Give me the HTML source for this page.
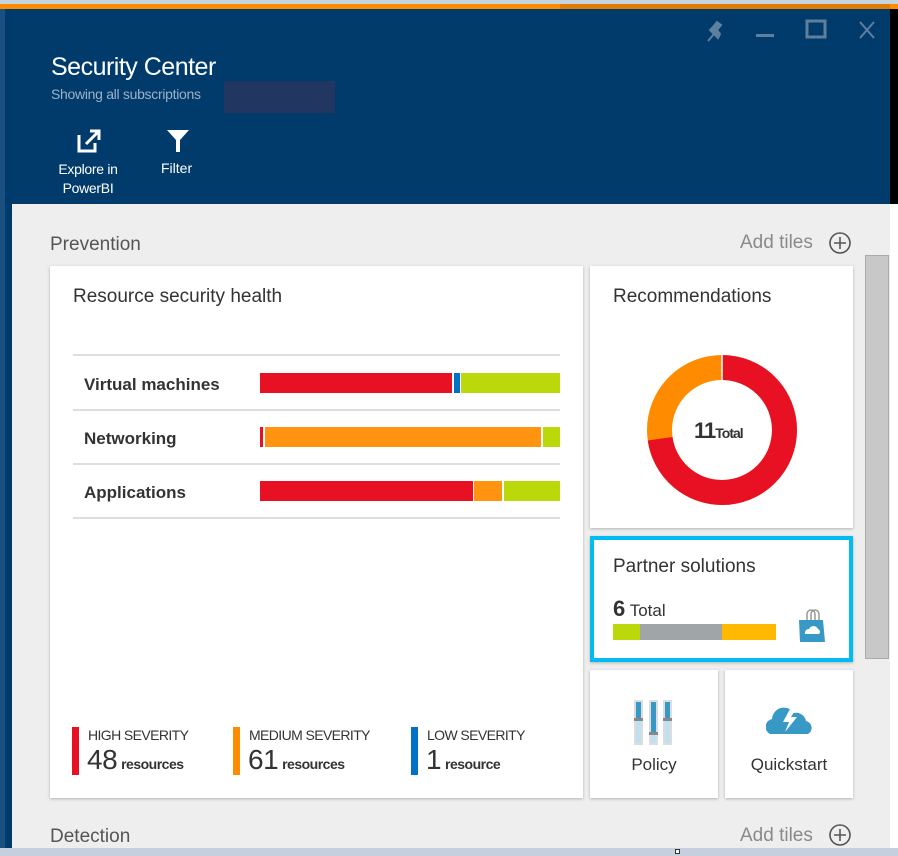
<!DOCTYPE html><html><head><style>
*{margin:0;padding:0;box-sizing:border-box}
body{width:898px;height:856px;overflow:hidden;background:#eeeeee;font-family:"Segoe UI","Liberation Sans",sans-serif;position:relative;color:#333}
.a{position:absolute}
.tile{position:absolute;background:#fff;box-shadow:0 1px 3px rgba(0,0,0,.25)}
.lbl{font-size:17px;font-weight:bold;color:#333}
</style></head><body>
<div class="a" style="left:0;top:0;width:898px;height:4px;background:#c8d3e0"></div>
<div class="a" style="left:0;top:4px;width:898px;height:5px;background:#ff8c00"></div>
<div class="a" style="left:560px;top:4px;width:330px;height:5px;background:#e07c00"></div>
<div class="a" style="left:0;top:9px;width:12px;height:847px;background:#003a6c"></div>
<div class="a" style="left:0;top:9px;width:5px;height:847px;background:#1a5080"></div>
<div class="a" style="left:12px;top:9px;width:878px;height:195px;background:#003b6b"></div>
<div class="a" style="left:890px;top:9px;width:8px;height:195px;background:#000"></div>
<div class="a" style="left:890px;top:204px;width:8px;height:652px;background:#fff"></div>
<div class="a" style="left:51px;top:53px;color:#fff;font-size:25px;letter-spacing:-.5px">Security Center</div>
<div class="a" style="left:51px;top:86px;color:#9bb2c9;font-size:14px;letter-spacing:-.3px">Showing all subscriptions</div>
<div class="a" style="left:224px;top:81px;width:111px;height:32px;background:#213762"></div>
<svg class="a" style="left:700px;top:16px" width="190" height="30">
<path d="M14 18 L8 25 M10 14 L18 22 L20 18 L17 14 L21 9 L17 6 L13 11 Z" fill="#5f7f9f" stroke="#5f7f9f" stroke-width="2"/>
<rect x="56" y="18" width="18" height="3" fill="#5f7f9f"/>
<rect x="107" y="5" width="18" height="16" fill="none" stroke="#5f7f9f" stroke-width="3"/>
<path d="M160 6 L174 22 M174 6 L160 22" stroke="#5f7f9f" stroke-width="2"/>
</svg>
<svg class="a" style="left:76px;top:128px" width="26" height="26"><path d="M3 7 V23 H19 V15" fill="none" stroke="#fff" stroke-width="3"/><path d="M10 16 L22 4 M14 3 H23 V12" fill="none" stroke="#fff" stroke-width="3"/></svg>
<svg class="a" style="left:166px;top:129px" width="24" height="24"><path d="M1 1 H23 L14 11 V23 H10 V11 Z" fill="#fff"/></svg>
<div class="a" style="left:48px;top:160px;width:80px;text-align:center;color:#fff;font-size:14px;line-height:19px;letter-spacing:-.3px">Explore in PowerBI</div>
<div class="a" style="left:161px;top:160px;color:#fff;font-size:14px">Filter</div>
<div class="a" style="left:50px;top:234px;font-size:19px;color:#555">Prevention</div>
<div class="a" style="left:740px;top:232px;font-size:19px;color:#8a8a8a">Add tiles</div>
<svg class="a" style="left:828px;top:231px" width="24" height="24"><circle cx="12" cy="12" r="10" fill="none" stroke="#555" stroke-width="1.6"/><path d="M12 6V18M6 12H18" stroke="#555" stroke-width="1.6"/></svg>
<div class="a" style="left:50px;top:826px;font-size:19px;color:#555">Detection</div>
<div class="a" style="left:740px;top:825px;font-size:19px;color:#8a8a8a">Add tiles</div>
<svg class="a" style="left:828px;top:823px" width="24" height="24"><circle cx="12" cy="12" r="10" fill="none" stroke="#555" stroke-width="1.6"/><path d="M12 6V18M6 12H18" stroke="#555" stroke-width="1.6"/></svg>
<div class="a" style="left:0;top:848px;width:898px;height:8px;background:#c5cfde"></div>
<div class="a" style="left:865px;top:255px;width:24px;height:404px;background:#c8c8c8;border:1px solid #aaa"></div>

<div class="tile" style="left:50px;top:266px;width:533px;height:532px">
<div class="a" style="left:23px;top:20px;font-size:19px;color:#333">Resource security health</div>
<div class="a" style="left:23px;top:88px;width:487px;height:2px;background:#ddd"></div>
<div class="a" style="left:23px;top:143px;width:487px;height:2px;background:#ddd"></div>
<div class="a" style="left:23px;top:197px;width:487px;height:2px;background:#ddd"></div>
<div class="a" style="left:23px;top:251px;width:487px;height:2px;background:#ddd"></div>
<div class="a lbl" style="left:34px;top:109px">Virtual machines</div>
<div class="a lbl" style="left:34px;top:163px">Networking</div>
<div class="a lbl" style="left:34px;top:217px">Applications</div>
<div class="a" style="left:210px;top:107px;width:192px;height:20px;background:#e81123"></div>
<div class="a" style="left:404px;top:107px;width:6px;height:20px;background:#0072c6"></div>
<div class="a" style="left:411px;top:107px;width:99px;height:20px;background:#bad80a"></div>
<div class="a" style="left:210px;top:161px;width:3px;height:20px;background:#e81123"></div>
<div class="a" style="left:215px;top:161px;width:276px;height:20px;background:#ff9410"></div>
<div class="a" style="left:493px;top:161px;width:17px;height:20px;background:#bad80a"></div>
<div class="a" style="left:210px;top:215px;width:213px;height:20px;background:#e81123"></div>
<div class="a" style="left:424px;top:215px;width:28px;height:20px;background:#ff9410"></div>
<div class="a" style="left:454px;top:215px;width:56px;height:20px;background:#bad80a"></div>
<div class="a" style="left:22px;top:461px;width:7px;height:48px;background:#e81123"></div>
<div class="a" style="left:183px;top:461px;width:7px;height:48px;background:#ff8c00"></div>
<div class="a" style="left:361px;top:461px;width:7px;height:48px;background:#0072c6"></div>
<div class="a" style="left:38px;top:461px;font-size:14px;color:#333;letter-spacing:-.6px">HIGH SEVERITY</div>
<div class="a" style="left:199px;top:461px;font-size:14px;color:#333;letter-spacing:-.6px">MEDIUM SEVERITY</div>
<div class="a" style="left:377px;top:461px;font-size:14px;color:#333;letter-spacing:-.6px">LOW SEVERITY</div>
<div class="a" style="left:37px;top:478px;color:#333;white-space:nowrap;letter-spacing:-.5px"><span style="font-size:28px">48</span> <b style="font-size:14px">resources</b></div>
<div class="a" style="left:198px;top:478px;color:#333;white-space:nowrap;letter-spacing:-.5px"><span style="font-size:28px">61</span> <b style="font-size:14px">resources</b></div>
<div class="a" style="left:376px;top:478px;color:#333;white-space:nowrap;letter-spacing:-.5px"><span style="font-size:28px">1</span> <b style="font-size:14px">resource</b></div>
</div>

<div class="tile" style="left:590px;top:266px;width:263px;height:262px">
<div class="a" style="left:23px;top:20px;font-size:19px">Recommendations</div>
<svg class="a" style="left:57px;top:89px" width="150" height="150">
<circle cx="75" cy="75" r="62.5" fill="none" stroke="#ff8c00" stroke-width="25"/>
<circle cx="75" cy="75" r="62.5" fill="none" stroke="#e81123" stroke-width="25" stroke-dasharray="285.6 400" transform="rotate(-90 75 75)"/>
<line x1="75" y1="0" x2="75" y2="25" stroke="#fff" stroke-width="1.5"/>
</svg>
<div class="a" style="left:104px;top:152px;font-size:22px;font-weight:bold;color:#333;letter-spacing:-1px">11<span style="font-size:14px">Total</span></div>
</div>

<div class="tile" style="left:590px;top:536px;width:263px;height:126px;border:4px solid #00bcf2">
<div class="a" style="left:19px;top:16px;font-size:19px">Partner solutions</div>
<div class="a" style="left:19px;top:56px;color:#333"><b style="font-size:22px">6</b> <span style="font-size:17px">Total</span></div>
<div class="a" style="left:19px;top:84px;width:27px;height:16px;background:#bad80a"></div>
<div class="a" style="left:46px;top:84px;width:82px;height:16px;background:#a0a5a8"></div>
<div class="a" style="left:128px;top:84px;width:54px;height:16px;background:#ffb900"></div>
<svg class="a" style="left:203px;top:68px" width="32" height="36"><path d="M10 12 V6 A4 4 0 0 1 18 6 V12 M14 12 V6 A4 4 0 0 1 22 6 V12" fill="none" stroke="#999" stroke-width="1.5"/><path d="M2 12 H26 L28 34 H3 Z" fill="#3999c6"/><path d="M8 26 A4 4 0 0 1 12 21 A5 5 0 0 1 21 21 A3 3 0 0 1 22 26 Z" fill="#fff"/></svg>
</div>

<div class="tile" style="left:590px;top:670px;width:128px;height:128px">
<svg class="a" style="left:44px;top:30px" width="40" height="46">
<rect x="0" y="0" width="9" height="45" fill="#ddd"/><rect x="2" y="2" width="5" height="41" fill="#bfe0f0"/><rect x="2" y="2" width="5" height="17" fill="#3999c6"/><rect x="0" y="18" width="9" height="3" fill="#888"/>
<rect x="15" y="0" width="9" height="45" fill="#ddd"/><rect x="17" y="2" width="5" height="41" fill="#bfe0f0"/><rect x="17" y="2" width="5" height="31" fill="#3999c6"/><rect x="15" y="32" width="9" height="3" fill="#888"/>
<rect x="29" y="0" width="9" height="45" fill="#ddd"/><rect x="31" y="2" width="5" height="41" fill="#bfe0f0"/><rect x="31" y="2" width="5" height="17" fill="#3999c6"/><rect x="29" y="18" width="9" height="3" fill="#888"/>
</svg>
<div class="a" style="left:0;top:85px;width:128px;text-align:center;font-size:17px">Policy</div>
</div>
<div class="tile" style="left:725px;top:670px;width:128px;height:128px">
<svg class="a" style="left:41px;top:35px" width="48" height="30"><path d="M4 29 A8 8 0 0 1 6 14 A12 12 0 0 1 28 8 A10 10 0 0 1 40 16 A7 7 0 0 1 42 29 Z" fill="#3999c6"/><path d="M24 4 L17 17 H23 L19 27 L31 12 H25 L30 4 Z" fill="#fff"/></svg>
<div class="a" style="left:0;top:85px;width:128px;text-align:center;font-size:17px">Quickstart</div>
</div>
<div class="a" style="left:675px;top:849px;width:5px;height:5px;border:1px solid #333;background:#fff"></div>
</body></html>
